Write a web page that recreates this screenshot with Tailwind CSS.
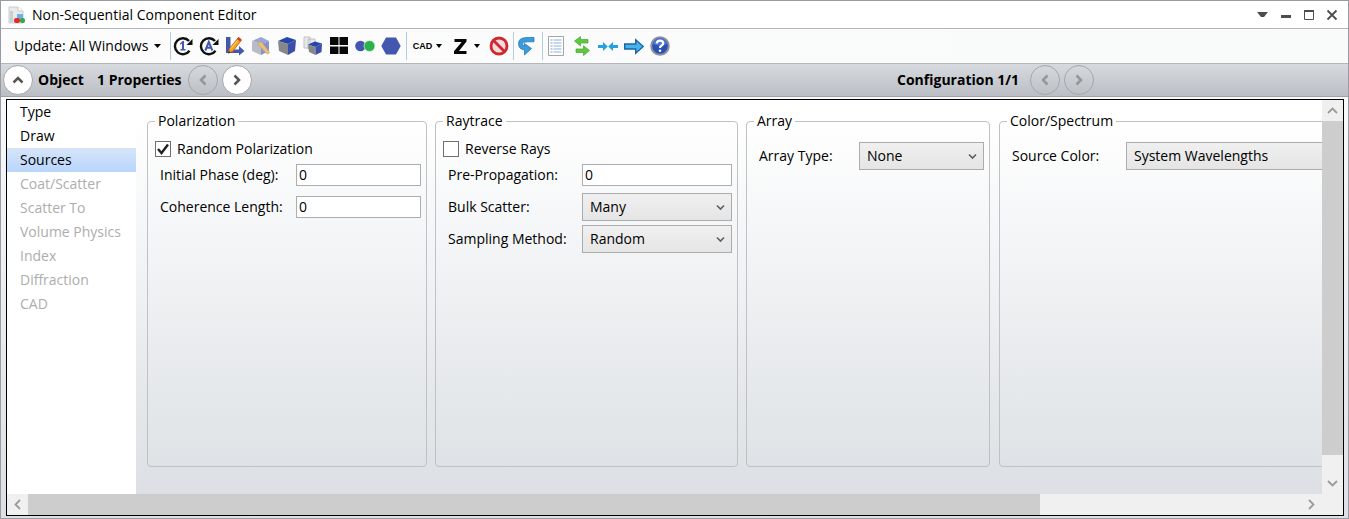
<!DOCTYPE html>
<html lang="en">
<head>
<meta charset="utf-8">
<meta name="viewport" content="width=device-width, initial-scale=1">
<title>Non-Sequential Component Editor</title>
<script src="https://cdn.jsdelivr.net/npm/@tailwindcss/browser@4"></script>
</head>
<body class="flex h-screen flex-col overflow-hidden border border-[#9a9ba2] bg-linear-to-b from-white to-[#dce0e4] font-['Open_Sans','Noto_Sans',sans-serif] text-[14px] leading-6 text-black">

<!-- Title bar -->
<header class="flex h-7 shrink-0 items-center border-b border-[#b4b5b9] bg-white pr-[5px]">
  <svg class="ml-[7px] size-[18px]" viewBox="0 0 18 18" aria-hidden="true">
    <path d="M1 1h9l5 4v12H1z" fill="#e9eaec" stroke="#c9cbcf"/>
    <path d="M10 1v4h5" fill="#fff" stroke="#c9cbcf"/>
    <path d="M2 5h3v11H2z" fill="#c9cfcf"/>
    <rect x="9" y="8" width="6" height="5" fill="#68b5e8"/>
    <rect x="6" y="12" width="6" height="5" rx="2" fill="#df2c2c"/>
    <rect x="12" y="12" width="5" height="5" rx="2" fill="#35a84a"/>
  </svg>
  <h1 class="ml-[6px] whitespace-nowrap">Non-Sequential Component Editor</h1>
  <div class="ml-auto flex">
    <button class="grid h-6 w-[23px] place-items-center" aria-label="Window menu"><svg width="11" height="5" viewBox="0 0 11 5"><path d="M0 0h11L7 5H4z" fill="#4d4d4d"/></svg></button>
    <button class="grid h-6 w-[23px] place-items-center" aria-label="Minimize"><svg width="12" height="12" viewBox="0 0 12 12"><path d="M1 6h10v3H1z" fill="#4d4d4d"/></svg></button>
    <button class="grid h-6 w-[23px] place-items-center" aria-label="Maximize"><svg width="12" height="12" viewBox="0 0 12 12"><path d="M1.500 2v8.500h9V2" fill="none" stroke="#4d4d4d"/><path d="M1 1h10v2H1z" fill="#4d4d4d"/></svg></button>
    <button class="grid h-6 w-[23px] place-items-center" aria-label="Close"><svg width="12" height="12" viewBox="0 0 12 12"><path d="M1.500 1.500l9 9M10.500 1.500l-9 9" stroke="#4d4d4d" stroke-width="1.800"/></svg></button>
  </div>
</header>

<!-- Toolbar -->
<nav class="flex h-[35px] shrink-0 items-center border-b border-[#b4b5b9] bg-linear-to-r from-[#fcfcfd] to-[#f9fafa]" aria-label="Editor tools">
  <button class="flex w-[169px] shrink-0 items-center gap-[6px] pl-[13px] whitespace-nowrap">Update: All Windows
    <svg width="7" height="4" viewBox="0 0 7 4"><path d="M0 0h7L3.500 4z"/></svg></button>
  <span class="-mr-px h-7 w-px bg-[#b5cbe2]"></span>
  <button class="grid h-6 w-[26px] place-items-center" aria-label="Update once">
    <svg width="20" height="20" viewBox="0 0 20 20"><path d="M16 5A8 8 0 1 0 16.500 14.800" fill="none" stroke="#111" stroke-width="2.400"/><path d="M19.500 3v6H13.500z" fill="#111"/><path d="M7 7.500L9.700 5H11v8h1.500v1.500h-5V13H9V7.500L7 8.800z" fill="#4457ae"/></svg></button>
  <button class="grid h-6 w-[26px] place-items-center" aria-label="Update all">
    <svg width="20" height="20" viewBox="0 0 20 20"><path d="M16 5A8 8 0 1 0 16.500 14.800" fill="none" stroke="#111" stroke-width="2.400"/><path d="M19.500 3v6H13.500z" fill="#111"/><path d="M6.300 14.500L9.800 6l3.500 8.500M7.500 11.700h4.600" fill="none" stroke="#4457ae" stroke-width="2"/></svg></button>
  <button class="grid h-6 w-[26px] place-items-center" aria-label="Edit axes">
    <svg width="20" height="20" viewBox="0 0 20 20"><path d="M1 1h4.500v12.500H14V10l5.500 5-5.500 4.500V17H1z" fill="#4457ae"/><path d="M13.500 1.500l3 2.500-8.500 11L3.500 17l1-4.500z" fill="#f1a81c" stroke="#d3662a"/><path d="M13.500 1l3 2.500-1.500 2-3-2.500z" fill="#d53a32"/><path d="M6 12.500L12.500 4.500" stroke="#ffe078"/><path d="M3 17.500l1-2.500 1.500 1.500z" fill="#222"/></svg></button>
  <button class="grid h-6 w-[26px] place-items-center" aria-label="Edit object">
    <svg width="20" height="20" viewBox="0 0 20 20"><path d="M1 5l9-4 8 4-8 3z" fill="#9aa6d8"/><path d="M1 5l9 3v11l-9-4z" fill="#b9bcc4"/><path d="M10 8l8-3v10l-8 4z" fill="#8593cb"/><path d="M7 6l4 .5 7.500 10-2 1.700L7.500 9z" fill="#eabf79" stroke="#cfa26a" stroke-width=".7"/></svg></button>
  <button class="grid h-6 w-[26px] place-items-center" aria-label="Object">
    <svg width="20" height="20" viewBox="0 0 20 20"><path d="M1 5l9-4 9 3-8 4z" fill="#2646a8"/><path d="M1 5l10 3v11L2 15z" fill="#85878b"/><path d="M11 8l8-4-1 11-7 4z" fill="#3d4ea8"/></svg></button>
  <button class="grid h-6 w-[26px] place-items-center" aria-label="Copy object">
    <svg width="20" height="20" viewBox="0 0 20 20"><path d="M1 1h6v11H1zM5 3h7v10H5z" fill="#e8e9eb" stroke="#c0c2c7"/><path d="M5 8.500l7-3 7 2-6.500 3.500z" fill="#2646a8"/><path d="M5 8.500l7.500 2.500V19L6 16z" fill="#85878b"/><path d="M12.500 11l6.500-3.500-.5 8.500-6 3z" fill="#3d4ea8"/></svg></button>
  <button class="grid h-6 w-[26px] place-items-center" aria-label="Grid view">
    <svg width="20" height="20" viewBox="0 0 20 20"><path d="M1 1h8.500v8H1zM10.500 1H19v8h-8.500zM1 10.500h8.500V18H1zM10.500 10.500H19V18h-8.500z" fill="#080808"/></svg></button>
  <button class="grid h-6 w-[26px] place-items-center" aria-label="Combine">
    <svg width="20" height="20" viewBox="0 0 20 20"><circle cx="5.500" cy="10" r="5.300" fill="#4457ae"/><circle cx="14.500" cy="10" r="5.500" fill="#2bb34b" stroke="#fff" stroke-width=".6"/></svg></button>
  <button class="grid h-6 w-[26px] place-items-center" aria-label="Polygon">
    <svg width="20" height="20" viewBox="0 0 20 20"><path d="M5 1.500h10l4.700 8.500-4.700 8.500H5L.3 10z" fill="#4457ae"/></svg></button>
  <span class="ml-[2px] h-7 w-px bg-[#b5cbe2]"></span>
  <button class="flex h-6 w-[41px] items-center justify-center gap-1" aria-label="CAD">
    <span class="font-['Liberation_Sans'] text-[9px] font-bold">CAD</span>
    <svg width="6" height="4" viewBox="0 0 6 4"><path d="M0 0h6L3 4z"/></svg></button>
  <button class="flex h-6 w-[38px] items-center justify-center gap-[7px]" aria-label="Z">
    <svg width="13" height="17" viewBox="0 0 13 17" aria-hidden="true"><path d="M.5 1H12.500V3.500L5 13H12.500V16H0V13.200L7.700 4H.5z" fill="#080808"/></svg>
    <svg width="6" height="4" viewBox="0 0 6 4"><path d="M0 0h6L3 4z"/></svg></button>
  <button class="grid h-6 w-[26px] place-items-center" aria-label="Ignore">
    <svg width="20" height="20" viewBox="0 0 20 20"><circle cx="10" cy="10" r="8" fill="#f5dcdc" stroke="#cf2630" stroke-width="2.800"/><path d="M4.500 4.500l11 11" stroke="#cf2630" stroke-width="2.800"/></svg></button>
  <span class="ml-px h-7 w-px bg-[#b5cbe2]"></span>
  <button class="grid h-6 w-[26px] place-items-center" aria-label="Go to">
    <svg width="20" height="20" viewBox="0 0 20 20"><path d="M17 1.500H10Q1.500 1.500 1.500 7.500Q1.500 13.500 7.500 13.800V19L14.500 12.500L7.500 7.500V10Q5.500 9.500 5.500 8Q5.500 6 10 5.800H17z" fill="#3a9ddb" stroke="#1f6fae" stroke-width=".7"/></svg></button>
  <span class="ml-[2px] h-7 w-px bg-[#b5cbe2]"></span>
  <button class="grid h-6 w-[26px] place-items-center" aria-label="Report">
    <svg width="20" height="20" viewBox="0 0 20 20"><path d="M2.500.5h15v19h-15z" fill="#fff" stroke="#a3a5aa"/><path d="M4.500 4h2M4.500 7h2M4.500 10h2M4.500 13h2M4.500 16h2" stroke="#7d9fc4"/><path d="M7.500 4h8M7.500 7h8M7.500 10h8M7.500 13h8M7.500 16h8" stroke="#c4d9ee" stroke-width="2"/></svg></button>
  <button class="grid h-6 w-[26px] place-items-center" aria-label="Swap">
    <svg width="20" height="20" viewBox="0 0 20 20"><path d="M2.500 5L8.500.5v3H16V7H8.500v3z" fill="#5fc840" stroke="#43a62c" stroke-width=".7"/><path d="M17.500 14.500l-6-4.700V13H4v3.500h7.500v3z" fill="#5fc840" stroke="#43a62c" stroke-width=".7"/></svg></button>
  <button class="grid h-6 w-[26px] place-items-center" aria-label="Collapse columns">
    <svg width="20" height="20" viewBox="0 0 20 20"><path d="M9.800 10.500L5 6v3H0v3h5v3zM10.200 10.500L15 6v3h5v3h-5v3z" fill="#27a0e2"/></svg></button>
  <button class="grid h-6 w-[26px] place-items-center" aria-label="Next">
    <svg width="20" height="20" viewBox="0 0 20 20"><path d="M.7 8h11V3.700L19.300 10.500l-7.600 6.800V13H.7z" fill="#45b4ec" stroke="#1c63a5" stroke-width="1.400"/></svg></button>
  <button class="grid h-6 w-[26px] place-items-center" aria-label="Help">
    <svg width="20" height="20" viewBox="0 0 20 20"><circle cx="10" cy="10" r="8.800" fill="#2a50b4" stroke="#8b919d" stroke-width="2"/><path d="M3 8a7.200 7.200 0 0 1 14 0q-7 3-14 0z" fill="#4f76cd"/><path d="M6.700 7.500Q7 4.700 10 4.700T13.300 7.300Q13.300 9 11.400 9.800Q10 10.500 10 12" fill="none" stroke="#fff" stroke-width="2.200"/><circle cx="10" cy="14.700" r="1.300" fill="#fff"/></svg></button>
</nav>

<!-- Object and configuration navigation -->
<section class="flex h-[33px] shrink-0 items-center border-b border-[#9fa2a8] bg-linear-to-b from-[#d7dade] to-[#bbbec4] font-bold whitespace-nowrap">
  <button class="ml-[2px] grid size-[30px] place-items-center rounded-full border border-[#a5a6a9] bg-white" aria-label="Collapse properties"><svg width="12" height="8" viewBox="0 0 12 8"><path d="M1.500 6.500L6 2l4.500 4.500" fill="none" stroke="#555" stroke-width="2.500"/></svg></button>
  <span class="ml-[5px] w-[59px]">Object</span>
  <span class="w-[91px]">1 Properties</span>
  <button disabled class="grid size-[30px] place-items-center rounded-full border border-[#a5a7ab]" aria-label="Previous object"><svg width="8" height="12" viewBox="0 0 8 12"><path d="M6.500 1.500L2 6l4.500 4.500" fill="none" stroke="#94969a" stroke-width="2.500"/></svg></button>
  <button class="ml-1 grid size-[30px] place-items-center rounded-full border border-[#a5a6a9] bg-white" aria-label="Next object"><svg width="8" height="12" viewBox="0 0 8 12"><path d="M1.500 1.500L6 6l-4.500 4.500" fill="none" stroke="#555" stroke-width="2.500"/></svg></button>
  <div class="mr-[254px] ml-auto flex items-center">
    <span class="w-[133px]">Configuration 1/1</span>
    <button disabled class="grid size-[30px] place-items-center rounded-full border border-[#a5a7ab]" aria-label="Previous configuration"><svg width="8" height="12" viewBox="0 0 8 12"><path d="M6.500 1.500L2 6l4.500 4.500" fill="none" stroke="#94969a" stroke-width="2.500"/></svg></button>
    <button disabled class="ml-1 grid size-[30px] place-items-center rounded-full border border-[#a5a7ab]" aria-label="Next configuration"><svg width="8" height="12" viewBox="0 0 8 12"><path d="M1.500 1.500L6 6l-4.500 4.500" fill="none" stroke="#94969a" stroke-width="2.500"/></svg></button>
  </div>
</section>

<!-- Properties -->
<main class="mt-[2px] mr-1 mb-[2px] ml-[5px] flex min-h-0 grow flex-col border border-black">
  <div class="flex min-h-0 grow">
    <div class="w-[129px] shrink-0 bg-white whitespace-nowrap" role="tablist" aria-label="Property pages">
      <button class="block h-6 w-full pl-[13px] text-left" role="tab">Type</button>
      <button class="block h-6 w-full pl-[13px] text-left" role="tab">Draw</button>
      <button class="block h-6 w-full bg-linear-to-b from-[#d6e4f8] to-[#b9d6fd] pl-[13px] text-left" role="tab" aria-selected="true">Sources</button>
      <button disabled class="block h-6 w-full pl-[13px] text-left text-[#adadad]" role="tab">Coat/Scatter</button>
      <button disabled class="block h-6 w-full pl-[13px] text-left text-[#adadad]" role="tab">Scatter To</button>
      <button disabled class="block h-6 w-full pl-[13px] text-left text-[#adadad]" role="tab">Volume Physics</button>
      <button disabled class="block h-6 w-full pl-[13px] text-left text-[#adadad]" role="tab">Index</button>
      <button disabled class="block h-6 w-full pl-[13px] text-left text-[#adadad]" role="tab">Diffraction</button>
      <button disabled class="block h-6 w-full pl-[13px] text-left text-[#adadad]" role="tab">CAD</button>
    </div>

    <div class="flex min-w-0 grow gap-2 overflow-hidden bg-linear-to-b from-white from-5% to-[#dce0e4] pt-[9px] pb-[27px] pl-[11px] whitespace-nowrap">
      <fieldset class="w-[280px] shrink-0 rounded-[4px] border border-[#bfc1c5] pr-[5px] pl-[7px]">
        <legend class="px-[3px]">Polarization</legend>
        <label class="mt-1 flex h-6 items-center gap-[6px]">
          <span class="grid">
            <input type="checkbox" checked class="peer size-4 appearance-none border border-[#707070] bg-white [grid-area:1/1]">
            <svg class="invisible size-4 peer-checked:visible [grid-area:1/1]" viewBox="0 0 16 16"><path d="M3 8l3.500 4L13 3.500" fill="none" stroke="#222" stroke-width="2.400"/></svg>
          </span>Random Polarization</label>
        <div class="-mt-[2px] grid auto-rows-[32px] grid-cols-[141px_125px] items-center">
          <label for="phase" class="pl-[5px]">Initial Phase (deg):</label>
          <input id="phase" value="0" class="h-[22px] w-[125px] border border-[#abadb3] bg-white px-[2px]">
          <label for="coherence" class="pl-[5px]">Coherence Length:</label>
          <input id="coherence" value="0" class="h-[22px] w-[125px] border border-[#abadb3] bg-white px-[2px]">
        </div>
      </fieldset>

      <fieldset class="w-[303px] shrink-0 rounded-[4px] border border-[#bfc1c5] pr-[5px] pl-[7px]">
        <legend class="px-[3px]">Raytrace</legend>
        <label class="mt-1 flex h-6 items-center gap-[6px]">
          <span class="grid">
            <input type="checkbox" class="peer size-4 appearance-none border border-[#707070] bg-white [grid-area:1/1]">
            <svg class="invisible size-4 peer-checked:visible [grid-area:1/1]" viewBox="0 0 16 16"><path d="M3 8l3.500 4L13 3.500" fill="none" stroke="#222" stroke-width="2.400"/></svg>
          </span>Reverse Rays</label>
        <div class="-mt-[2px] grid auto-rows-[32px] grid-cols-[139px_150px] items-center">
          <label for="prop" class="pl-[5px]">Pre-Propagation:</label>
          <input id="prop" value="0" class="h-[22px] w-[150px] border border-[#abadb3] bg-white px-[2px]">
          <label for="bulk" class="pl-[5px]">Bulk Scatter:</label>
          <span class="grid items-center">
            <select id="bulk" class="h-7 w-[150px] appearance-none border border-[#acacac] bg-linear-to-b from-[#f0f0f0] to-[#e5e5e5] pl-[7px] [grid-area:1/1]"><option>Many</option></select>
            <svg class="pointer-events-none mr-[7px] h-[7px] w-[9px] justify-self-end [grid-area:1/1]" viewBox="0 0 9 7"><path d="M1 1.500l3.500 3.500L8 1.500" fill="none" stroke="#5f5f5f" stroke-width="1.600"/></svg>
          </span>
          <label for="sampling" class="pl-[5px]">Sampling Method:</label>
          <span class="grid items-center">
            <select id="sampling" class="h-7 w-[150px] appearance-none border border-[#acacac] bg-linear-to-b from-[#f0f0f0] to-[#e5e5e5] pl-[7px] [grid-area:1/1]"><option>Random</option></select>
            <svg class="pointer-events-none mr-[7px] h-[7px] w-[9px] justify-self-end [grid-area:1/1]" viewBox="0 0 9 7"><path d="M1 1.500l3.500 3.500L8 1.500" fill="none" stroke="#5f5f5f" stroke-width="1.600"/></svg>
          </span>
        </div>
      </fieldset>

      <fieldset class="w-[244px] shrink-0 rounded-[4px] border border-[#bfc1c5] pr-[5px] pl-[7px]">
        <legend class="px-[3px]">Array</legend>
        <div class="mt-[7px] flex h-8 items-center">
          <label for="array" class="w-[105px] pl-[5px]">Array Type:</label>
          <span class="grid items-center">
            <select id="array" class="h-7 w-[125px] appearance-none border border-[#acacac] bg-linear-to-b from-[#f0f0f0] to-[#e5e5e5] pl-[7px] [grid-area:1/1]"><option>None</option></select>
            <svg class="pointer-events-none mr-[7px] h-[7px] w-[9px] justify-self-end [grid-area:1/1]" viewBox="0 0 9 7"><path d="M1 1.500l3.500 3.500L8 1.500" fill="none" stroke="#5f5f5f" stroke-width="1.600"/></svg>
          </span>
        </div>
      </fieldset>

      <fieldset class="ml-px w-[420px] shrink-0 rounded-[4px] border border-[#bfc1c5] pr-[5px] pl-[7px]">
        <legend class="px-[3px]">Color/Spectrum</legend>
        <div class="mt-[7px] flex h-8 items-center">
          <label for="color" class="w-[119px] shrink-0 pl-[5px]">Source Color:</label>
          <select id="color" class="h-7 w-[280px] appearance-none border border-[#acacac] bg-linear-to-b from-[#f0f0f0] to-[#e5e5e5] pl-[7px]"><option>System Wavelengths</option></select>
        </div>
      </fieldset>
    </div>

    <!-- Vertical scroll bar -->
    <div class="flex w-[21px] shrink-0 flex-col bg-[#f0f0f0]">
      <button class="grid h-[21px] place-items-center" aria-label="Scroll up"><svg width="11" height="7" viewBox="0 0 11 7"><path d="M1 6l4.500-4.500L10 6" fill="none" stroke="#9b9b9b" stroke-width="1.800"/></svg></button>
      <div class="grow pb-[18px]"><div class="h-full bg-[#cdcdcd]"></div></div>
      <button class="grid h-[21px] place-items-center" aria-label="Scroll down"><svg width="11" height="7" viewBox="0 0 11 7"><path d="M1 1l4.500 4.500L10 1" fill="none" stroke="#9b9b9b" stroke-width="1.800"/></svg></button>
    </div>
  </div>

  <!-- Horizontal scroll bar -->
  <div class="flex h-[21px] shrink-0 bg-[#f0f0f0] pr-[21px]">
    <button class="grid w-[21px] place-items-center" aria-label="Scroll left"><svg width="7" height="11" viewBox="0 0 7 11"><path d="M6 1L1.500 5.500 6 10" fill="none" stroke="#9b9b9b" stroke-width="1.800"/></svg></button>
    <div class="grow"><div class="h-full w-[79.500%] bg-[#cdcdcd]"></div></div>
    <button class="grid w-[21px] place-items-center" aria-label="Scroll right"><svg width="7" height="11" viewBox="0 0 7 11"><path d="M1 1l4.500 4.500L1 10" fill="none" stroke="#9b9b9b" stroke-width="1.800"/></svg></button>
  </div>
</main>
</body>
</html>
